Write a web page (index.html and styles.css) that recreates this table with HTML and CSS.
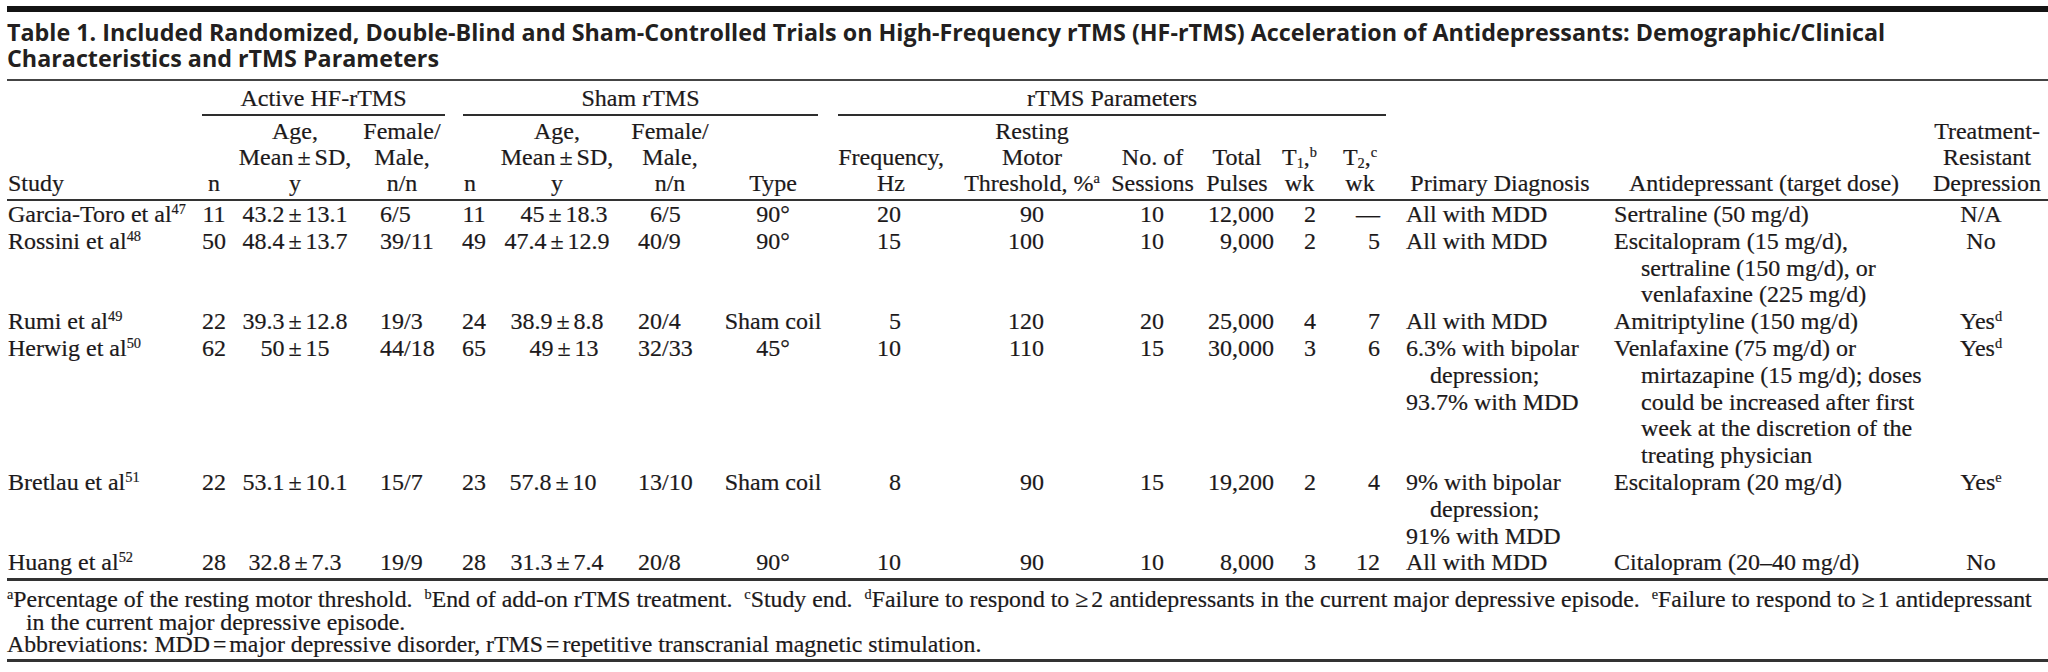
FILE: index.html
```html
<!DOCTYPE html>
<html lang="en">
<head>
<meta charset="utf-8">
<title>Table 1</title>
<link rel="stylesheet" href="styles.css">
</head>
<body>
<div class="page">
  <div class="topbar"></div>
  <h1 class="title">Table 1. Included Randomized, Double-Blind and Sham-Controlled Trials on High-Frequency rTMS (HF-rTMS) Acceleration of Antidepressants: Demographic/Clinical<br>Characteristics and rTMS Parameters</h1>
  <table class="tbl">
    <colgroup>
      <col class="c-study"><col class="c-n1"><col class="c-age1"><col class="c-fm1">
      <col class="c-n2"><col class="c-age2"><col class="c-fm2"><col class="c-type">
      <col class="c-freq"><col class="c-thr"><col class="c-ses"><col class="c-pul">
      <col class="c-t1"><col class="c-t2"><col class="c-diag"><col class="c-anti"><col class="c-trd">
    </colgroup>
    <thead>
      <tr class="grp-row">
        <th></th>
        <th colspan="3" class="grp g-active"><div class="grp-line">Active HF-rTMS</div></th>
        <th colspan="4" class="grp g-sham"><div class="grp-line">Sham rTMS</div></th>
        <th colspan="6" class="grp g-par"><div class="grp-line">rTMS Parameters</div></th>
        <th colspan="3"></th>
      </tr>
      <tr class="hd-row">
        <th class="h-left">Study</th>
        <th>n</th>
        <th>Age,<br>Mean<span class="pm">±</span>SD,<br>y</th>
        <th>Female/<br>Male,<br>n/n</th>
        <th>n</th>
        <th>Age,<br>Mean<span class="pm">±</span>SD,<br>y</th>
        <th>Female/<br>Male,<br>n/n</th>
        <th>Type</th>
        <th>Frequency,<br>Hz</th>
        <th>Resting<br>Motor<br>Threshold, %<span class="sup">a</span></th>
        <th>No. of<br>Sessions</th>
        <th>Total<br>Pulses</th>
        <th>T<span class="sub">1</span>,<span class="sup">b</span><br>wk</th>
        <th>T<span class="sub">2</span>,<span class="sup">c</span><br>wk</th>
        <th>Primary Diagnosis</th>
        <th>Antidepressant (target dose)</th>
        <th>Treatment-<br>Resistant<br>Depression</th>
      </tr>
    </thead>
    <tbody>
      <tr>
        <td class="d-study">Garcia-Toro et al<span class="sup">47</span></td>
        <td class="d-c">11</td>
        <td class="d-c">43.2<span class="pm">±</span>13.1</td>
        <td class="d-fm1">6/5</td>
        <td class="d-n2">11</td>
        <td class="d-c shift-r">45<span class="pm">±</span>18.3</td>
        <td class="d-fm2 narrow">6/5</td>
        <td class="d-c">90°</td>
        <td class="d-freq">20</td>
        <td class="d-thr">90</td>
        <td class="d-ses">10</td>
        <td class="d-pul">12,000</td>
        <td class="d-t1">2</td>
        <td class="d-t2">—</td>
        <td class="d-diag">All with MDD</td>
        <td class="d-anti">Sertraline (50 mg/d)</td>
        <td class="d-trd">N/A</td>
      </tr>
      <tr>
        <td class="d-study">Rossini et al<span class="sup">48</span></td>
        <td class="d-c">50</td>
        <td class="d-c">48.4<span class="pm">±</span>13.7</td>
        <td class="d-fm1">39/11</td>
        <td class="d-n2">49</td>
        <td class="d-c">47.4<span class="pm">±</span>12.9</td>
        <td class="d-fm2">40/9</td>
        <td class="d-c">90°</td>
        <td class="d-freq">15</td>
        <td class="d-thr">100</td>
        <td class="d-ses">10</td>
        <td class="d-pul">9,000</td>
        <td class="d-t1">2</td>
        <td class="d-t2">5</td>
        <td class="d-diag">All with MDD</td>
        <td class="d-anti"><div class="hang">Escitalopram (15 mg/d),<br>sertraline (150 mg/d), or<br>venlafaxine (225 mg/d)</div></td>
        <td class="d-trd">No</td>
      </tr>
      <tr>
        <td class="d-study">Rumi et al<span class="sup">49</span></td>
        <td class="d-c">22</td>
        <td class="d-c">39.3<span class="pm">±</span>12.8</td>
        <td class="d-fm1">19/3</td>
        <td class="d-n2">24</td>
        <td class="d-c">38.9<span class="pm">±</span>8.8</td>
        <td class="d-fm2">20/4</td>
        <td class="d-c">Sham coil</td>
        <td class="d-freq">5</td>
        <td class="d-thr">120</td>
        <td class="d-ses">20</td>
        <td class="d-pul">25,000</td>
        <td class="d-t1">4</td>
        <td class="d-t2">7</td>
        <td class="d-diag">All with MDD</td>
        <td class="d-anti">Amitriptyline (150 mg/d)</td>
        <td class="d-trd">Yes<span class="sup">d</span></td>
      </tr>
      <tr>
        <td class="d-study">Herwig et al<span class="sup">50</span></td>
        <td class="d-c">62</td>
        <td class="d-c">50<span class="pm">±</span>15</td>
        <td class="d-fm1">44/18</td>
        <td class="d-n2">65</td>
        <td class="d-c shift-r">49<span class="pm">±</span>13</td>
        <td class="d-fm2">32/33</td>
        <td class="d-c">45°</td>
        <td class="d-freq">10</td>
        <td class="d-thr">110</td>
        <td class="d-ses">15</td>
        <td class="d-pul">30,000</td>
        <td class="d-t1">3</td>
        <td class="d-t2">6</td>
        <td class="d-diag"><div class="hang-d">6.3% with bipolar<br>depression;</div>93.7% with MDD</td>
        <td class="d-anti"><div class="hang">Venlafaxine (75 mg/d) or<br>mirtazapine (15 mg/d); doses<br>could be increased after first<br>week at the discretion of the<br>treating physician</div></td>
        <td class="d-trd">Yes<span class="sup">d</span></td>
      </tr>
      <tr>
        <td class="d-study">Bretlau et al<span class="sup">51</span></td>
        <td class="d-c">22</td>
        <td class="d-c">53.1<span class="pm">±</span>10.1</td>
        <td class="d-fm1">15/7</td>
        <td class="d-n2">23</td>
        <td class="d-c shift-l">57.8<span class="pm">±</span>10</td>
        <td class="d-fm2">13/10</td>
        <td class="d-c">Sham coil</td>
        <td class="d-freq">8</td>
        <td class="d-thr">90</td>
        <td class="d-ses">15</td>
        <td class="d-pul">19,200</td>
        <td class="d-t1">2</td>
        <td class="d-t2">4</td>
        <td class="d-diag"><div class="hang-d">9% with bipolar<br>depression;</div>91% with MDD</td>
        <td class="d-anti">Escitalopram (20 mg/d)</td>
        <td class="d-trd">Yes<span class="sup">e</span></td>
      </tr>
      <tr class="last-row">
        <td class="d-study">Huang et al<span class="sup">52</span></td>
        <td class="d-c">28</td>
        <td class="d-c">32.8<span class="pm">±</span>7.3</td>
        <td class="d-fm1">19/9</td>
        <td class="d-n2">28</td>
        <td class="d-c">31.3<span class="pm">±</span>7.4</td>
        <td class="d-fm2">20/8</td>
        <td class="d-c">90°</td>
        <td class="d-freq">10</td>
        <td class="d-thr">90</td>
        <td class="d-ses">10</td>
        <td class="d-pul">8,000</td>
        <td class="d-t1">3</td>
        <td class="d-t2">12</td>
        <td class="d-diag">All with MDD</td>
        <td class="d-anti">Citalopram (20–40 mg/d)</td>
        <td class="d-trd">No</td>
      </tr>
    </tbody>
  </table>
  <div class="notes">
    <p class="note-line"><span class="sup">a</span>Percentage of the resting motor threshold.<span class="gap"></span><span class="sup">b</span>End of add-on rTMS treatment.<span class="gap"></span><span class="sup">c</span>Study end.<span class="gap"></span><span class="sup">d</span>Failure to respond to <span class="ge">≥</span>2 antidepressants in the current major depressive episode.<span class="gap"></span><span class="sup">e</span>Failure to respond to <span class="ge">≥</span>1 antidepressant<br>in the current major depressive episode.</p>
    <p class="note-abbr">Abbreviations: MDD<span class="eq">=</span>major depressive disorder, rTMS<span class="eq">=</span>repetitive transcranial magnetic stimulation.</p>
  </div>
</div>
</body>
</html>
```

FILE: styles.css
```css
html, body {
  margin: 0;
  padding: 0;
  background: #ffffff;
}

body {
  color: #1c191a;
  font-family: "Liberation Serif", "Times New Roman", serif;
  -webkit-text-stroke: 0.2px #1c191a;
}

.page {
  width: 2041px;
  padding: 6px 0 0 7px;
}

.topbar {
  height: 6px;
  background: #141414;
}

.title {
  margin: 0;
  padding: 6.5px 0 8.5px 0;
  font-family: "Open Sans", "Noto Sans", "Liberation Sans", sans-serif;
  font-weight: 700;
  font-size: 23.3px;
  line-height: 26px;
  letter-spacing: 0;
  color: #231f20;
  -webkit-text-stroke: 0;
  border-bottom: 2px solid #444444;
}

.tbl {
  width: 2041px;
  table-layout: fixed;
  border-collapse: separate;
  border-spacing: 0;
  font-size: 24px;
  line-height: 26.8px;
}

.c-study { width: 189px; }
.c-n1 { width: 36px; }
.c-age1 { width: 126px; }
.c-fm1 { width: 88px; }
.c-n2 { width: 48px; }
.c-age2 { width: 126px; }
.c-fm2 { width: 100px; }
.c-type { width: 106px; }
.c-freq { width: 130px; }
.c-thr { width: 152px; }
.c-ses { width: 89px; }
.c-pul { width: 80px; }
.c-t1 { width: 45px; }
.c-t2 { width: 76px; }
.c-diag { width: 204px; }
.c-anti { width: 324px; }
.c-trd { width: 122px; }

th {
  font-weight: 400;
  padding: 0;
}

.grp-row th {
  padding-top: 4px;
  vertical-align: bottom;
  line-height: 26px;
  white-space: nowrap;
}

.grp-line {
  border-bottom: 2px solid #2e2e2e;
  padding-bottom: 3px;
  text-align: center;
}

.g-active { padding-left: 6px; padding-right: 1px; }
.g-sham { padding-left: 17px; padding-right: 8px; }
.g-par { padding-left: 12px; padding-right: 12px; }

.hd-row th {
  padding: 2px 0 3px 0;
  line-height: 26px;
  vertical-align: bottom;
  text-align: center;
  white-space: nowrap;
  border-bottom: 2px solid #333333;
}

.hd-row th.h-left {
  text-align: left;
  padding-left: 1px;
}

td {
  padding: 0;
  vertical-align: top;
  white-space: nowrap;
}

.last-row td {
  padding-bottom: 2px;
  border-bottom: 3px solid #333333;
}

.d-study { text-align: left; padding-left: 1px; }
.d-c { text-align: center; }
.d-c.shift-r { padding-left: 14px; }
.d-c.shift-l { padding-right: 8px; }
.d-n2 { text-align: center; padding-left: 8px; }
.d-fm1 { padding-left: 22px; }
.d-fm2 { padding-left: 18px; }
.d-fm2.narrow { padding-left: 30px; }
.d-freq { text-align: right; padding-right: 55px; }
.d-thr { text-align: right; padding-right: 64px; }
.d-ses { text-align: right; padding-right: 33px; }
.d-pul { text-align: right; padding-right: 3px; }
.d-t1 { text-align: right; padding-right: 6px; }
.d-t2 { text-align: right; padding-right: 18px; }
.d-diag { padding-left: 8px; }
.d-anti { padding-left: 12px; }
.d-trd { text-align: center; padding-right: 12px; }

.hang {
  padding-left: 27px;
  text-indent: -27px;
}

.hang-d {
  padding-left: 24px;
  text-indent: -24px;
}

.pm {
  margin: 0 4px;
}

.eq {
  margin: 0 3px;
}

.sup {
  font-size: 0.6em;
  vertical-align: 0.55em;
  line-height: 0;
}

.sub {
  font-size: 0.6em;
  vertical-align: -0.2em;
  line-height: 0;
}

.notes {
  padding: 7px 0 3px 0;
  border-bottom: 3px solid #333333;
  font-size: 23.8px;
  line-height: 22.5px;
}

.notes p {
  margin: 0;
  white-space: nowrap;
}

.note-line {
  padding-left: 19px;
  text-indent: -19px;
}

.gap {
  display: inline-block;
  width: 12px;
}

.ge {
  margin-right: 3px;
}
```
